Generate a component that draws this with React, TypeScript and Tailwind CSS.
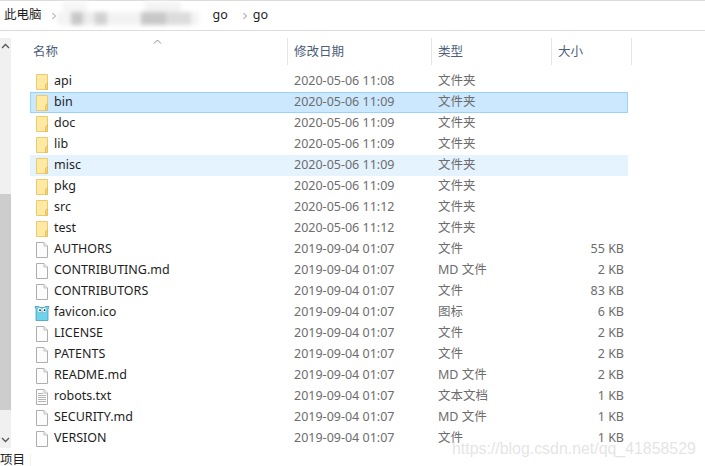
const folders: [string, string][] = [
  ["api", "2020-05-06 11:08"],
  ["bin", "2020-05-06 11:09"],
  ["doc", "2020-05-06 11:09"],
  ["lib", "2020-05-06 11:09"],
  ["misc", "2020-05-06 11:09"],
  ["pkg", "2020-05-06 11:09"],
  ["src", "2020-05-06 11:12"],
  ["test", "2020-05-06 11:12"],
];
const files: [string, string, string, string][] = [
  ["AUTHORS", "file", "文件", "55 KB"],
  ["CONTRIBUTING.md", "file", "MD 文件", "2 KB"],
  ["CONTRIBUTORS", "file", "文件", "83 KB"],
  ["favicon.ico", "go", "图标", "6 KB"],
  ["LICENSE", "file", "文件", "2 KB"],
  ["PATENTS", "file", "文件", "2 KB"],
  ["README.md", "file", "MD 文件", "2 KB"],
  ["robots.txt", "txt", "文本文档", "1 KB"],
  ["SECURITY.md", "file", "MD 文件", "1 KB"],
  ["VERSION", "file", "文件", "1 KB"],
];

function FolderIcon() {
  return (
    <svg width="14" height="16" viewBox="0 0 14 16" className="shrink-0">
      <path d="M1.5 0.5H12.5V15.5H1.5Z" fill="#ffe9a3" stroke="#eccb6e" />
      <path d="M10.5 15.5V10.5L12.5 8.5V15.5Z" fill="#f6d477" stroke="#e6bd55" strokeWidth="0.8" />
    </svg>
  );
}
function FileIcon({ lines }: { lines?: boolean }) {
  return (
    <svg width="14" height="16" viewBox="0 0 14 16" className="shrink-0">
      <path d="M1.5 0.5H9L12.5 4V15.5H1.5Z" fill="#fcfcfc" stroke="#aeaeae" />
      <path d="M9 0.5V4H12.5" fill="#f0f0f0" stroke="#bdbdbd" />
      {lines && <path d="M3 4.5H8M3 6.5H11M3 8.5H11M3 10.5H11M3 12.5H11" stroke="#b4b4b4" />}
    </svg>
  );
}
function GoIcon() {
  return (
    <svg width="16" height="16" viewBox="0 0 16 16" className="-ml-[1px] shrink-0">
      <path d="M1 1.5H5L5.8 2.5H10.2L11 1.5H15L14 4.5V15.5H2V4.5Z" fill="#6fd3ee" stroke="#3b90a8" strokeWidth="0.7" />
      <circle cx="5.7" cy="5" r="2" fill="#fff" />
      <circle cx="10.3" cy="5" r="2" fill="#fff" />
      <circle cx="6" cy="5.2" r="0.9" fill="#222" />
      <circle cx="10.6" cy="5.2" r="0.9" fill="#222" />
      <ellipse cx="8" cy="7.8" rx="1.2" ry="0.8" fill="#c9a58a" />
    </svg>
  );
}
function Row({ name, icon, date, type, size, bg }: { name: string; icon: React.ReactNode; date: string; type: string; size?: string; bg?: string }) {
  return (
    <div className={`flex h-[21px] w-[598px] items-center border ${bg ?? "border-transparent"}`}>
      <div className="flex w-[23px] shrink-0 pl-[4px]">{icon}</div>
      <div className="w-[240px] shrink-0 text-[#1e1e1e]">{name}</div>
      <div className="w-[144px] shrink-0 text-[#6d6d6d]">{date}</div>
      <div className="w-[120px] shrink-0 text-[#6d6d6d]">{type}</div>
      <div className="w-[66px] shrink-0 text-right text-[#6d6d6d]">{size}</div>
    </div>
  );
}
function Head({ w, children }: { w: string; children?: React.ReactNode }) {
  return <div className={`flex h-[27px] shrink-0 items-center border-r border-[#e5e5e5] pl-[6px] pt-[2px] ${w}`}>{children}</div>;
}

export default function App() {
  return (
    <div className="relative flex h-[466px] w-[705px] flex-col overflow-hidden bg-white text-[12.5px] text-[#1e1e1e] [font-family:'Noto_Sans','Noto_Sans_CJK_SC',sans-serif]">
      <div className="flex h-[31px] shrink-0 items-center border-t border-b border-[#dcdcdc] pl-[4px]">
        <span>此电脑</span>
        <svg width="6" height="8" viewBox="0 0 6 8" className="ml-[9px]"><path d="M1.5 1L4.5 4L1.5 7" fill="none" stroke="#8a8a8a" /></svg>
        <div className="flex h-[27px] w-[152px] flex-col blur-[2px]">
          <div className="flex h-[10px]">
            <div className="ml-[6px] w-[24px] bg-[#f6f6f6]" />
            <div className="ml-[58px] w-[36px] bg-[#f3f3f3]" />
          </div>
          <div className="flex h-[13px]">
            <div className="w-[14px] bg-[#f4f4f4]" />
            <div className="w-[12px] bg-[#c8c8c8]" />
            <div className="w-[12px] bg-[#ececec]" />
            <div className="w-[12px] bg-[#d2d2d2]" />
            <div className="w-[34px] bg-[#f2f2f2]" />
            <div className="w-[25px] bg-[#c8c8c8]" />
            <div className="w-[25px] bg-[#dcdcdc]" />
            <div className="w-[8px] bg-[#f4f4f4]" />
          </div>
        </div>
        <span className="ml-[4px]">go</span>
        <svg width="6" height="8" viewBox="0 0 6 8" className="ml-[14px]"><path d="M1.5 1L4.5 4L1.5 7" fill="none" stroke="#8a8a8a" /></svg>
        <span className="ml-[5px]">go</span>
      </div>

      <div className="flex min-h-0 flex-1">
        <div className="mt-[7px] flex h-[410px] w-[11px] shrink-0 flex-col items-center bg-[#f0f0f0]">
          <svg width="9" height="6" viewBox="0 0 9 6" className="mt-[5px]"><path d="M1 5L4.5 1.5L8 5" fill="none" stroke="#555" strokeWidth="1.3" /></svg>
          <div className="mt-[145px] w-full flex-1 bg-[#cdcdcd]" />
          <div className="flex h-[38px] w-full items-end justify-center">
            <svg width="9" height="6" viewBox="0 0 9 6" className="mb-[5px]"><path d="M1 1L4.5 4.5L8 1" fill="none" stroke="#555" strokeWidth="1.3" /></svg>
          </div>
        </div>

        <div className="ml-[19px] flex flex-col">
          <div className="relative mt-[7px] flex text-[#4c607a]">
            <Head w="w-[261px] -ml-[3px]">名称</Head>
            <Head w="w-[144px]">修改日期</Head>
            <Head w="w-[120px]">类型</Head>
            <Head w="w-[80px]">大小</Head>
            <svg width="9" height="5" viewBox="0 0 9 5" className="absolute left-[123px] top-[1px]"><path d="M1 4.5L4.5 1L8 4.5" fill="none" stroke="#8c8c8c" /></svg>
          </div>
          <div className="mt-[6px] flex flex-col">
            {folders.map(([n, d]) => (
              <Row
                key={n}
                name={n}
                icon={<FolderIcon />}
                date={d}
                type="文件夹"
                bg={n === "bin" ? "border-[#99d1ff] bg-[#cce8ff]" : n === "misc" ? "border-[#e5f3ff] bg-[#e5f3ff]" : undefined}
              />
            ))}
            {files.map(([n, k, t, s]) => (
              <Row
                key={n}
                name={n}
                icon={k === "go" ? <GoIcon /> : <FileIcon lines={k === "txt"} />}
                date="2019-09-04 01:07"
                type={t}
                size={s}
              />
            ))}
          </div>
        </div>
      </div>

      <div className="flex h-[18px] shrink-0 items-end">
        <div className="flex h-[12px] w-[31px] items-center border-r border-[#f0f0f0]">项目</div>
      </div>

      <div className="absolute left-[452px] top-[437px] text-[15.9px] text-[#d8d8d8]/70 [font-family:'Liberation_Sans',sans-serif]">
        https://blog.csdn.net/qq_41858529
      </div>
    </div>
  );
}
